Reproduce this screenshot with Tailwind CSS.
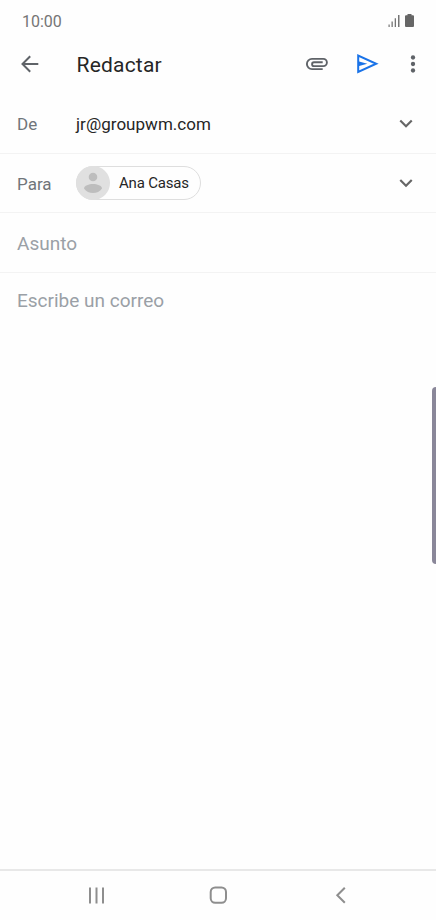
<!DOCTYPE html>
<html lang="es">
<head>
    <meta charset="UTF-8">
    <meta name="viewport" content="width=device-width, initial-scale=1.0">
    <title>Redactar</title>
    <script src="https://cdn.jsdelivr.net/npm/@tailwindcss/browser@4"></script>
</head>
<body class="bg-[#fefefe] font-['Roboto',sans-serif]">
<div class="relative flex flex-col w-[436px] h-[920px] overflow-hidden">
    <!-- Status bar -->
    <div class="flex items-center justify-between h-[42px] px-[22px] shrink-0">
        <span class="pt-[2px] text-[16px] leading-none text-[#757575]">10:00</span>
        <div class="flex items-center gap-[5px] pb-px">
            <svg class="w-[12px] h-[13px]" viewBox="0 0 12 13" fill="#757575">
                <path d="M.5 10.500h1.200V13H.5zM3.500 7.500h1.300V13H3.500zM6.700 4.200H8V13H6.700zM10 1h1.500v12H10z"/>
            </svg>
            <svg class="w-[9px] h-[13px]" viewBox="0 0 9 13" fill="#666">
                <path d="M2.500 0h4v1.200H8a1 1 0 0 1 1 1V12a1 1 0 0 1-1 1H1a1 1 0 0 1-1-1V2.200a1 1 0 0 1 1-1h1.500z"/>
            </svg>
        </div>
    </div>

    <!-- Toolbar -->
    <header class="flex items-center h-[44px] pl-[17px] shrink-0">
        <svg class="w-[26px] h-[26px]" viewBox="0 0 26 26" fill="none" stroke="#5f6368" stroke-width="2">
            <path d="M21.300 13H6M13.200 5.300 5.500 13l7.700 7.700"/>
        </svg>
        <h1 class="flex-1 pl-[33.500px] pt-[2px] text-[21px] leading-none tracking-[0.2px] text-[#262626]">Redactar</h1>
        <svg class="w-[26px] h-[26px]" viewBox="0 0 26 26" fill="none" stroke="#5f6368" stroke-width="1.900">
            <path d="M18.700 18.100H8a5.100 5.100 0 0 1 0-10.200h11.300a3.600 3.600 0 0 1 0 7.200H10a1.900 1.900 0 0 1 0-3.800h8.700"/>
        </svg>
        <svg class="w-[26px] h-[26px] ml-[25px]" viewBox="0 0 26 26">
            <path d="M3.200 4.600v16.300L21.200 12.750z" fill="none" stroke="#1a73e8" stroke-width="2"/>
            <path d="M3.200 10.200 12.300 12.750l-9.100 2.550z" fill="#1a73e8"/>
        </svg>
        <svg class="w-[26px] h-[26px] ml-[19px] mr-[10px]" viewBox="0 0 24 24" fill="#5f6368">
            <circle cx="12" cy="6" r="2"/>
            <circle cx="12" cy="12" r="2"/>
            <circle cx="12" cy="18" r="2"/>
        </svg>
    </header>

    <!-- Fields -->
    <div class="flex items-center h-[59px] mt-[9px] px-[17px] border-b border-[#f3f3f3] shrink-0">
        <span class="w-[59px] text-[17px] leading-none text-[#70757a]">De</span>
        <span class="flex-1 text-[17px] leading-none tracking-[0.03px] text-[#262626]">jr@groupwm.com</span>
        <svg class="w-[26px] h-[26px]" viewBox="0 0 24 24" fill="#666">
            <path d="M7.410 8.090 12 12.670l4.590-4.580L18 9.500l-6 6-6-6 1.410-1.410z"/>
        </svg>
    </div>
    <div class="flex items-center h-[59px] px-[17px] border-b border-[#f3f3f3] shrink-0">
        <span class="w-[59px] pt-[2px] text-[17px] leading-none text-[#70757a]">Para</span>
        <div class="flex-1">
            <div class="flex items-center w-[125px] h-[34px] rounded-full border border-[#dedede]">
                <svg class="w-[34px] h-[34px] -ml-px shrink-0" viewBox="0 0 34 34">
                    <circle cx="17" cy="17" r="17" fill="#e0e0e0"/>
                    <circle cx="17" cy="11" r="4.300" fill="#bdbdbd"/>
                    <path d="M8 22.500c0-3 5-4.500 9-4.500s9 1.500 9 4.500c-2 3-5.500 4.600-9 4.600s-7-1.600-9-4.600z" fill="#bdbdbd"/>
                </svg>
                <span class="pl-[9px] text-[15px] leading-none tracking-[-0.2px] whitespace-nowrap text-[#262626]">Ana Casas</span>
            </div>
        </div>
        <svg class="w-[26px] h-[26px]" viewBox="0 0 24 24" fill="#666">
            <path d="M7.410 8.590 12 13.170l4.590-4.580L18 10l-6 6-6-6 1.410-1.410z"/>
        </svg>
    </div>
    <div class="flex items-center h-[60px] pl-[17px] border-b border-[#f3f3f3] shrink-0">
        <span class="pt-[2px] text-[19px] leading-none text-[#9aa0a6]">Asunto</span>
    </div>
    <div class="flex-1 pl-[17px] pt-[18px] text-[19px] leading-none text-[#9aa0a6]">Escribe un correo</div>

    <!-- Navigation bar -->
    <nav class="flex items-center h-[51px] pl-[87px] pb-px border-t-2 border-[#e8e8e8] shrink-0">
        <svg class="w-[18px] h-[18px]" viewBox="0 0 18 18" fill="none" stroke="#8e8e8e" stroke-width="2">
            <path d="M3 1.500v16M9.500 1.500v16M16 1.500v16"/>
        </svg>
        <svg class="w-[18px] h-[18px] ml-[104px]" viewBox="0 0 18 18" fill="none" stroke="#8e8e8e" stroke-width="2">
            <rect x="1.700" y="1.500" width="15.300" height="15.300" rx="4.500"/>
        </svg>
        <svg class="w-[12px] h-[18px] ml-[107px]" viewBox="0 0 12 18" fill="none" stroke="#8e8e8e" stroke-width="2">
            <path d="M10.800 1.800 3.300 9.300l7.500 7.500"/>
        </svg>
    </nav>

    <!-- Edge panel handle -->
    <div class="absolute right-0 top-[387px] w-[4px] h-[177px] rounded-l-[4px] bg-[#8a8799]"></div>
</div>
</body>
</html>
